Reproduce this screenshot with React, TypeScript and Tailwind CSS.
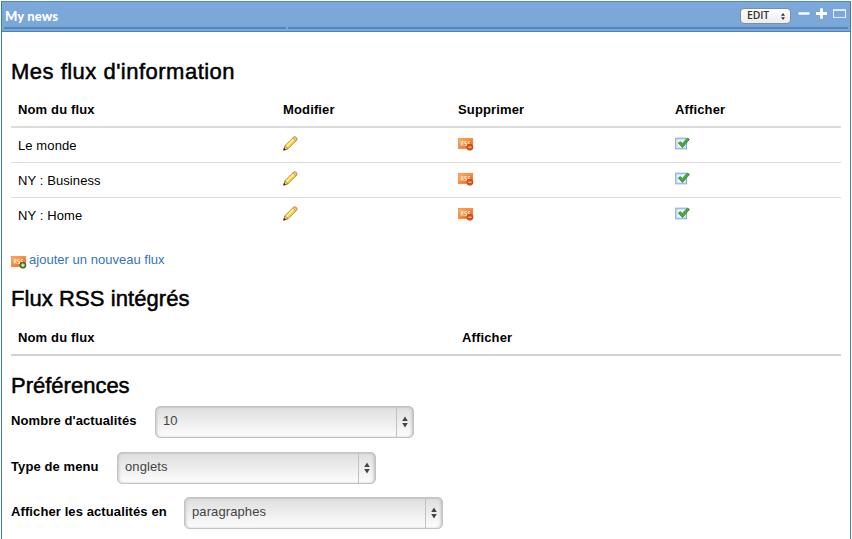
import React from "react";

const feeds = ["Le monde", "NY : Business", "NY : Home"];

function Pencil() {
  return (
    <svg width="15" height="15" viewBox="0 0 15 15" className="block">
      <path d="M0.7 14.2 L2 9.6 L10.6 1.2 Q12 0.2 13.4 1.6 Q14.6 3 13.6 4.3 L5.2 12.8 Z" fill="#f5cf42" stroke="#c08d38" strokeWidth="0.9" />
      <path d="M3.4 10.6 L11 3" stroke="#fff29a" strokeWidth="1.5" />
      <path d="M10 1.8 Q12 0 13.4 1.6 Q14.6 3 13 4.9 Z" fill="#f2c893" stroke="#c08a4a" strokeWidth="0.7" />
      <path d="M0.7 14.2 L2 9.8 L5 12.7 Z" fill="#e9c890" stroke="#a8702a" strokeWidth="0.6" />
      <path d="M0.4 14.5 L1.1 11.8 L3.1 13.7 Z" fill="#3b2b1a" />
    </svg>
  );
}

function Rss({ add = false, id }: { add?: boolean; id: string }) {
  return (
    <svg width="16" height="14" viewBox="0 0 16 14" className="block">
      <defs>
        <linearGradient id={id} x1="0" y1="0" x2="1" y2="1">
          <stop offset="0" stopColor="#fdb75c" />
          <stop offset="1" stopColor="#f4581c" />
        </linearGradient>
      </defs>
      <rect x="0.4" y="1.3" width="14.4" height="10.4" fill={`url(#${id})`} stroke="#f47b3a" strokeWidth="0.6" />
      <path d="M3.3 8.7V4.5H5V6.5H3.3M4.3 6.5L5.3 8.7M8.6 4.5H6.8V6.5H8.5V8.4H6.5M12 4.5H10.2V6.5H11.7V8.4H10" fill="none" stroke="#ffe9d5" strokeWidth="1" />
      <circle cx="11.9" cy="10.2" r="3.1" fill={add ? "#437d28" : "#d4531a"} stroke={add ? "#2f641f" : "#b9410f"} strokeWidth="0.5" />
      <path d={add ? "M10.1 10.2H13.7M11.9 8.4V12" : "M10.2 10.2H13.6"} stroke={add ? "#e9f6df" : "#ffb98c"} strokeWidth="1.2" />
    </svg>
  );
}

function Check() {
  return (
    <svg width="16" height="13" viewBox="0 0 16 13" className="block">
      <rect x="0.7" y="1.2" width="10.8" height="10.6" fill="#dceaf9" stroke="#8aace0" strokeWidth="1.1" />
      <rect x="2.2" y="2.7" width="7.8" height="7.6" fill="#eff6fd" stroke="#c6dcf3" strokeWidth="0.6" />
      <path d="M3.3 6.1 L5.3 4.5 L7.3 6.5 L12.5 1 L14.5 2.4 L7.5 10.5 Z" fill="#4ba83c" stroke="#358b2d" strokeWidth="0.8" />
    </svg>
  );
}

function Title({ children }: { children: React.ReactNode }) {
  return (
    <h2 className="h-7 whitespace-nowrap text-[22px] leading-7 font-normal [-webkit-text-stroke:0.5px_#000]">
      {children}
    </h2>
  );
}

function SelectBox({ value }: { value: string }) {
  return (
    <div className="flex h-8 w-[259px] rounded-[5px] border border-[#c2c2c2] bg-linear-to-b from-[#dedede] to-[#fdfdfd] text-[#444] shadow-[inset_0_1px_1px_#cacaca,inset_2px_0_3px_-1px_#c8c8c8,inset_-2px_0_3px_-1px_#bcbcbc]">
      <span className="flex-1 pl-[7px] text-[13px] leading-[28px] tracking-[0.1px]">{value}</span>
      <span className="flex w-[17px] items-center justify-center border-l border-[#c2c2c2]">
        <svg width="6" height="12" viewBox="0 0 6 12" fill="#444">
          <path d="M3 0.5L5.8 5H0.2ZM0.2 7H5.8L3 11.5Z" />
        </svg>
      </span>
    </div>
  );
}

function Preference({ label, value, gap }: { label: string; value: string; gap: string }) {
  return (
    <div className="flex h-8">
      <span className={`block whitespace-nowrap text-[13px] leading-[30px] font-bold tracking-[0.1px] ${gap}`}>{label}</span>
      <SelectBox value={value} />
    </div>
  );
}

export default function App() {
  return (
    <div className="h-[539px] w-[852px] overflow-hidden bg-white pt-px pl-px text-black [font-family:'Liberation_Sans',Arial,sans-serif]">
      <div className="h-[538px] w-[850px] border-x border-[#3f79b0]">
        <header className="flex h-[31px] flex-col border-t border-b border-t-[#5187bc] border-b-[#4d83b9] bg-[#7ba7d9]">
          <div className="flex h-[25px] justify-between pl-[3px]">
            <span className="text-[13px] leading-[28px] font-black tracking-[0.1px] text-white [font-family:Lato,sans-serif]">My news</span>
            <div className="flex pt-[6px]">
              <div className="flex h-[16px] w-[51px] items-center justify-between rounded-[4px] border border-[#7e8da0] bg-linear-to-b from-white to-[#ececec] pr-[5px] pl-[6px] text-[10.5px] font-semibold text-[#333] [font-family:'Open_Sans',sans-serif]">
                <span className="tracking-[-0.2px]">EDIT</span>
                <svg width="4" height="7" viewBox="0 0 4 7" fill="#333">
                  <path d="M2 0L4 2.8H0ZM0 4.2H4L2 7Z" />
                </svg>
              </div>
              <svg width="50" height="14" viewBox="0 0 50 14" className="mr-[2px] ml-[7px] block" fill="none" stroke="white">
                <path d="M0.5 5.5H11.5" strokeWidth="2.4" />
                <path d="M18 5.5H29M23.5 0.2V10.8" strokeWidth="2.8" />
                <rect x="35.5" y="1.8" width="12" height="7.6" stroke="#e5effa" strokeWidth="1" />
                <path d="M35 2.2H48" stroke="#e5effa" strokeWidth="1.5" />
              </svg>
            </div>
          </div>
          <div className="flex h-[2px] gap-[2px] pr-[2px] pl-[2px]">
            <span className="h-[2px] w-[282px] bg-[#5186bc]" />
            <span className="h-[2px] flex-1 bg-[#5186bc]" />
          </div>
        </header>

        <main className="w-[839px] pt-[26px] pl-[9px]">
          <div className="tracking-[0.49px]">
            <Title>Mes flux d'information</Title>
          </div>
          <div className="mt-[6px] grid h-[36px] grid-cols-[265px_175px_217px_1fr] border-b-2 border-[#dcdcdc] pl-[7px] text-[13px] leading-[36px] font-bold tracking-[0.14px]">
            <span>Nom du flux</span>
            <span>Modifier</span>
            <span>Supprimer</span>
            <span>Afficher</span>
          </div>
          {feeds.map((feed, i) => (
            <div key={feed} className={`grid h-[35px] grid-cols-[265px_175px_217px_1fr] pl-[7px] text-[13px] leading-[35px] tracking-[0.1px] ${i < 2 ? "border-b border-[#dcdcdc]" : ""}`}>
              <span>{feed}</span>
              <span className="pt-[8px]"><Pencil /></span>
              <span className="pt-[9px]"><Rss id={`rss-${i}`} /></span>
              <span className="pt-[9px]"><Check /></span>
            </div>
          ))}
          <div className="mt-[15px] flex h-6 items-center gap-[2px] text-[13px] leading-6 tracking-[0.02px] text-[#3275bd]">
            <span className="pt-[3px]"><Rss id="rss-add" add /></span>
            <span>ajouter un nouveau flux</span>
          </div>
          <div className="mt-[13px] tracking-[0.08px]">
            <Title>Flux RSS intégrés</Title>
          </div>
          <div className="mt-[8px] grid h-[35px] grid-cols-[444px_1fr] border-b-2 border-[#d2d2d2] pl-[7px] text-[13px] leading-[33px] font-bold tracking-[0.14px]">
            <span>Nom du flux</span>
            <span>Afficher</span>
          </div>
          <div className="mt-[16px]">
            <Title>Préférences</Title>
          </div>
          <div className="mt-[6px] flex flex-col gap-[13.5px]">
            <Preference label="Nombre d'actualités" value="10" gap="w-[144px]" />
            <Preference label="Type de menu" value="onglets" gap="w-[106px]" />
            <Preference label="Afficher les actualités en" value="paragraphes" gap="w-[173px]" />
          </div>
        </main>
      </div>
    </div>
  );
}
